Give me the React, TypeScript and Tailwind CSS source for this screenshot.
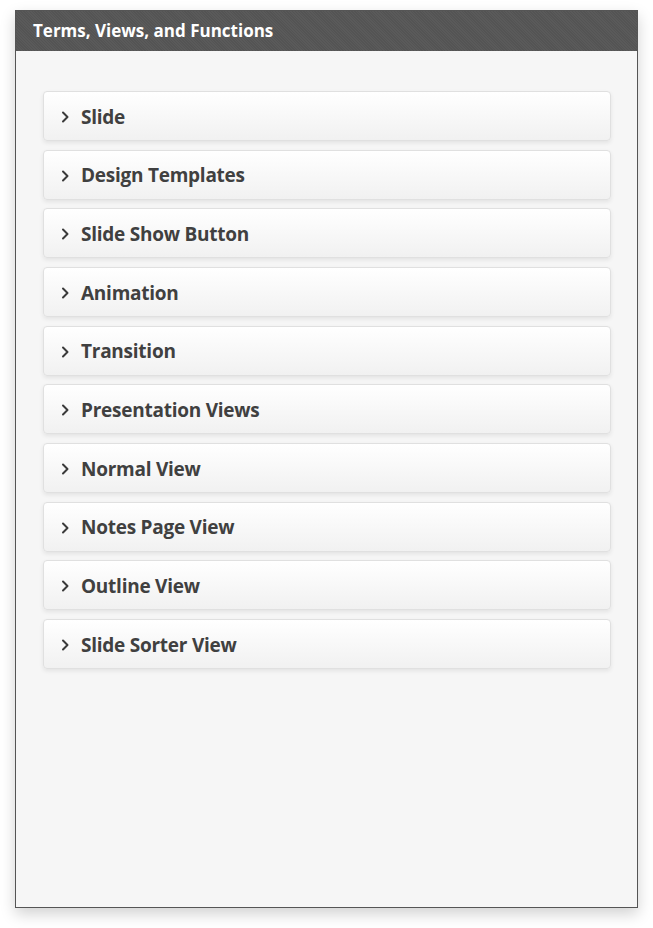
import React from "react";

const items = [
  "Slide",
  "Design Templates",
  "Slide Show Button",
  "Animation",
  "Transition",
  "Presentation Views",
  "Normal View",
  "Notes Page View",
  "Outline View",
  "Slide Sorter View",
];

function Chevron() {
  return (
    <svg width="9" height="14" viewBox="0 0 9 14" className="shrink-0">
      <path d="M2 2.5 L6.5 7 L2 11.5" fill="none" stroke="#3a3a3a" strokeWidth="2" strokeLinecap="round" strokeLinejoin="round" />
    </svg>
  );
}

export default function App() {
  return (
    <div className="w-[653px] h-[928px] bg-white pt-[10px] pl-[15px]" style={{ fontFamily: '"Open Sans", "Noto Sans", sans-serif' }}>
      <div className="w-[623px] h-[898px] border border-[#555] bg-[#f6f6f6] shadow-[0_6px_14px_rgba(0,0,0,0.18)] flex flex-col">
        <div className="h-[40px] shrink-0 bg-[#575757] bg-[repeating-linear-gradient(45deg,#5a5a5a_0px,#5a5a5a_1px,#545454_1px,#545454_2px)] flex items-center pl-[17px]">
          <span className="text-white font-bold text-[17px]">Terms, Views, and Functions</span>
        </div>
        <div className="flex flex-col gap-[8.67px] pt-[40px] pl-[27px] pr-[26px]">
          {items.map((t) => (
            <div
              key={t}
              className="h-[50px] rounded-[4px] border border-[#e0e0e0] bg-[linear-gradient(to_bottom,#ffffff,#f1f1f1)] shadow-[0_2px_4px_rgba(0,0,0,0.08)] flex items-center pl-[17px] pt-[2px] gap-[11px]"
            >
              <Chevron />
              <span className="text-[#404040] font-bold text-[19px] tracking-[-0.25px]">{t}</span>
            </div>
          ))}
        </div>
      </div>
    </div>
  );
}
